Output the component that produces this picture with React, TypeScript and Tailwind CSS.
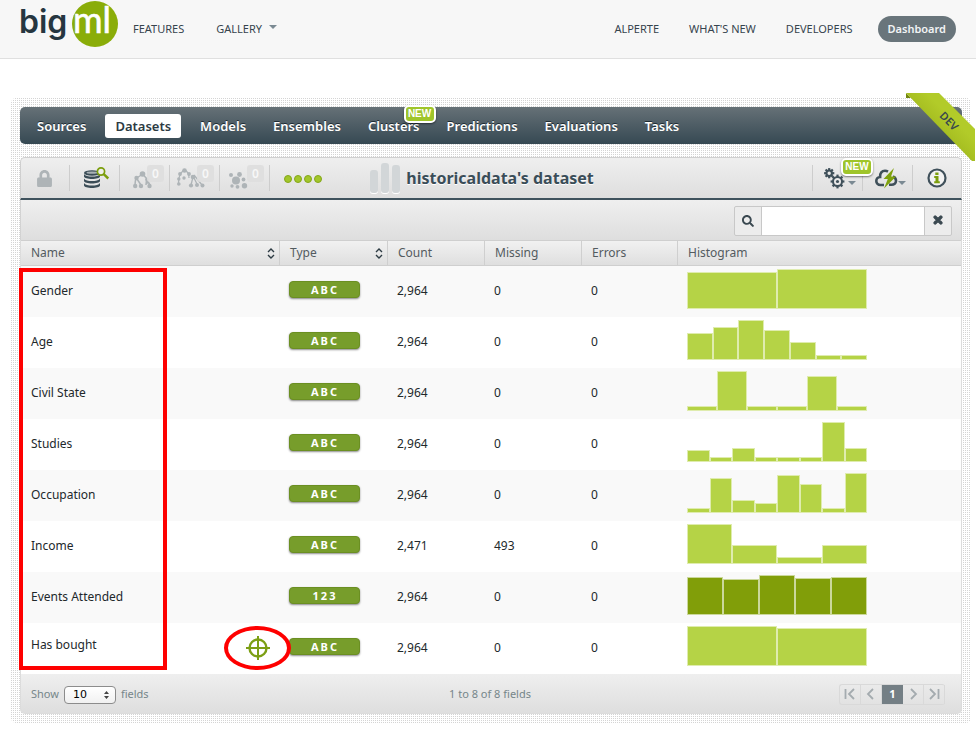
import React from 'react';
import { FaLock, FaSearch, FaTimes } from 'react-icons/fa';

type Field = {
  name: string;
  type: 'ABC' | '123';
  count: string;
  missing: string;
  errors: string;
  bars: number[];
  objective?: boolean;
};

const fields: Field[] = [
  { name: 'Gender', type: 'ABC', count: '2,964', missing: '0', errors: '0', bars: [37, 40] },
  { name: 'Age', type: 'ABC', count: '2,964', missing: '0', errors: '0', bars: [27, 33, 40, 30, 18, 5, 5] },
  { name: 'Civil State', type: 'ABC', count: '2,964', missing: '0', errors: '0', bars: [5, 40, 5, 5, 35, 5] },
  { name: 'Studies', type: 'ABC', count: '2,964', missing: '0', errors: '0', bars: [12, 5, 14, 5, 5, 5, 40, 14] },
  { name: 'Occupation', type: 'ABC', count: '2,964', missing: '0', errors: '0', bars: [5, 35, 13, 10, 38, 29, 5, 40] },
  { name: 'Income', type: 'ABC', count: '2,471', missing: '493', errors: '0', bars: [40, 19, 7, 19] },
  { name: 'Events Attended', type: '123', count: '2,964', missing: '0', errors: '0', bars: [38, 36, 40, 37, 38] },
  { name: 'Has bought', type: 'ABC', count: '2,964', missing: '0', errors: '0', bars: [40, 38], objective: true },
];

const tabs = ['Sources', 'Datasets', 'Models', 'Ensembles', 'Clusters', 'Predictions', 'Evaluations', 'Tasks'];

function Logo() {
  return (
    <svg width="98" height="48" viewBox="0 0 98 48" role="img" aria-label="bigml">
      <text x="-1" y="33" fontFamily="Inter, sans-serif" fontWeight="600" fontSize="32" fill="#263640">big</text>
      <circle cx="75" cy="24" r="23" fill="#8aad09" />
      <text x="53" y="33" fontFamily="Lato, sans-serif" fontSize="36" fill="#fff" stroke="#fff" strokeWidth="0.6">ml</text>
    </svg>
  );
}

function Caret({ className }: { className?: string }) {
  return (
    <svg width="8" height="4" viewBox="0 0 8 4" className={className} aria-hidden="true">
      <path d="M0 0h8L4 4z" fill="#7b8a93" />
    </svg>
  );
}

function SiteHeader() {
  return (
    <header className="flex h-[59px] items-center border-b border-[#e0e0e0] bg-[#f7f7f7] pl-5 pr-5 text-[11px] text-[#36444e]">
      <a href="#home" className="mb-[11px] mr-[15px]"><Logo /></a>
      <nav className="flex items-center gap-8">
        <a href="#features">FEATURES</a>
        <a href="#gallery" className="flex items-center gap-[7px]">GALLERY <Caret className="mb-1" /></a>
      </nav>
      <nav className="ml-auto flex items-center gap-[30px]">
        <a href="#account">ALPERTE</a>
        <a href="#news">WHAT'S NEW</a>
        <a href="#developers">DEVELOPERS</a>
      </nav>
      <button type="button" className="ml-[25px] h-[26px] rounded-full bg-[#69757b] px-[10px] text-[11px] font-semibold text-[#f2f4f5]">Dashboard</button>
    </header>
  );
}

function NewBadge({ className }: { className: string }) {
  return (
    <span className={`absolute flex h-[18px] w-8 items-center justify-center rounded-[5px] border-2 border-white bg-[#9fc52a] font-['Liberation_Sans',sans-serif] text-[10px] font-bold leading-none text-white shadow-[0_1px_2px_rgba(0,0,0,0.5)] ${className}`}>
      NEW
    </span>
  );
}

function Ribbon() {
  return (
    <svg width="70" height="68" viewBox="0 0 70 68" className="pointer-events-none absolute -right-[5px] -top-[5px]" role="img" aria-label="Development mode">
      <defs>
        <linearGradient id="ribbon" x1="0.35" y1="0.65" x2="0.65" y2="0.35">
          <stop offset="0" stopColor="#9db41b" />
          <stop offset="1" stopColor="#b2cb29" />
        </linearGradient>
      </defs>
      <path d="M0 0v5h5zM64 67h5v-5z" fill="#71850d" />
      <path d="M0 0h33l36 36v32h-3z" fill="url(#ribbon)" />
      <text x="43" y="32" transform="rotate(45 43 28)" textAnchor="middle" fontFamily="Noto Sans, sans-serif" fontWeight="600" fontSize="11" fill="#37474f">DEV</text>
    </svg>
  );
}

function MainTabs() {
  return (
    <nav className="flex h-[37px] items-center gap-[11px] rounded-[5px] bg-linear-to-b from-[#667177] to-[#364953] px-[9px] text-[13px] font-semibold text-white">
      {tabs.map((tab) => (
        <a
          key={tab}
          href={`#${tab.toLowerCase()}`}
          className={tab === 'Datasets'
            ? 'relative flex h-6 items-center rounded-[3px] bg-white px-[10px] pt-[2px] text-[#2c3a42]'
            : 'relative flex h-6 items-center px-2 pt-[2px] [text-shadow:0_-1px_0_#1d2b33]'}
        >
          {tab}
          {tab === 'Clusters' && <NewBadge className="-right-2 -top-[9px] [text-shadow:none]" />}
        </a>
      ))}
    </nav>
  );
}

function DatabaseIcon() {
  return (
    <svg width="26" height="22" viewBox="0 0 26 22" aria-hidden="true">
      <g fill="#3b4d57">
        <path d="M0 7v2.500C0 11 4 12 8 12s8-1 8-2.500V7c-1 1.800-4.500 2.600-8 2.600S1 8.800 0 7z" />
        <path d="M0 11.500v2.500c0 1.500 4 2.500 8 2.500s8-1 8-2.500v-2.500c-1 1.800-4.500 2.600-8 2.600s-7-.8-8-2.600z" />
        <path d="M0 16v2.500C0 20 4 21 8 21s8-1 8-2.500V16c-1 1.800-4.500 2.600-8 2.600S1 17.800 0 16z" />
        <ellipse cx="8" cy="6" rx="8" ry="2.700" />
      </g>
      <ellipse cx="8" cy="5.700" rx="5.500" ry="1.100" fill="#a9b1b5" />
      <circle cx="17" cy="4.500" r="3.600" fill="#eef0ea" stroke="#7c9e0d" strokeWidth="1.700" />
      <path d="M19.700 7.200l4.600 4.300" stroke="#7c9e0d" strokeWidth="2.400" />
    </svg>
  );
}

function TreeIcon() {
  return (
    <svg width="19" height="18" viewBox="0 0 19 18" fill="#aeb4b7" stroke="#aeb4b7" aria-hidden="true">
      <path d="M9 3.500L3 7.500M10 3.500l4 4.500v5M3 7.500C2 10 2 12 2 14M4 8l4 6M13.500 8.500L13 14M14 9l3 5" fill="none" strokeWidth="1.500" />
      <g stroke="none">
        <circle cx="9.500" cy="3" r="2.800" /><circle cx="3.500" cy="7" r="2.200" />
        <circle cx="2.200" cy="15" r="2.200" /><circle cx="8" cy="15" r="2.200" />
        <circle cx="16.500" cy="15" r="2.200" /><circle cx="14" cy="8.500" r="1.800" />
      </g>
    </svg>
  );
}

function EnsembleIcon() {
  return (
    <svg width="28" height="20" viewBox="0 0 28 20" fill="#aeb4b7" stroke="#aeb4b7" aria-hidden="true">
      <path d="M7 2C3 5 1.500 9 1.500 15M8 2c3 2 4 5 4 8M16 9l-2 8M16 8l4 8M17 7l8 10" fill="none" strokeWidth="1.300" />
      <g stroke="none">
        <circle cx="7.500" cy="2.500" r="2.300" /><circle cx="3" cy="6" r="1.900" />
        <circle cx="1.800" cy="11" r="1.700" /><circle cx="1.800" cy="16" r="1.800" />
        <circle cx="7" cy="10" r="1.700" /><circle cx="12" cy="6" r="1.900" />
        <circle cx="16" cy="9" r="2.300" /><circle cx="14" cy="17.500" r="2.100" />
        <circle cx="20" cy="17" r="2" /><circle cx="25.500" cy="17.500" r="2" />
      </g>
    </svg>
  );
}

function ClusterIcon() {
  return (
    <svg width="19" height="17" viewBox="0 0 19 17" fill="#aeb4b7" aria-hidden="true">
      <circle cx="7" cy="8.500" r="4" /><circle cx="2" cy="3" r="2" />
      <circle cx="10.500" cy="2.500" r="2.400" /><circle cx="14.500" cy="7.500" r="1.900" />
      <circle cx="15.500" cy="13.800" r="2.700" /><circle cx="8.500" cy="14.800" r="1.900" />
      <circle cx="3" cy="14" r="1.700" />
    </svg>
  );
}

function Gear({ cx, cy, r, hub }: { cx: number; cy: number; r: number; hub: string }) {
  return (
    <g transform={`translate(${cx} ${cy})`}>
      {[0, 45, 90, 135].map((a) => (
        <path key={a} d={`M0 ${-r - 2.4}V${r + 2.4}`} transform={`rotate(${a})`} stroke="#3f505a" strokeWidth="2.200" />
      ))}
      <circle r={r} fill="#e9e9e9" stroke="#3f505a" strokeWidth="2" />
      <circle r={r * 0.35} fill={hub} />
    </g>
  );
}

function GearsIcon() {
  return (
    <svg width="21" height="21" viewBox="0 0 21 21" aria-hidden="true">
      <Gear cx={5.200} cy={5.200} r={2.700} hub="#e9e9e9" />
      <Gear cx={13.500} cy={13.500} r={4.500} hub="#3f505a" />
    </svg>
  );
}

function CloudBoltIcon() {
  return (
    <svg width="23" height="21" viewBox="0 0 23 21" aria-hidden="true">
      <path d="M9 17H5.500C3 17 1.300 15.300 1.300 13s1.600-4 3.800-4C4.800 5 7 2.800 10 2.800c1 0 2 .2 3 .8M14 16.800h2.500c2.500 0 4.500-1.500 4.500-4 0-2-1-3.500-3-4.300" fill="none" stroke="#3f505a" strokeWidth="2.600" />
      <path d="M19 0L8.500 11h4.300L9 20.500 21 8.500h-5z" fill="#7fa20d" />
    </svg>
  );
}

function ToolButton({ label, children, badge }: { label: string; children: React.ReactNode; badge?: string }) {
  return (
    <button type="button" aria-label={label} className="relative flex h-[26px] w-[50px] items-center justify-center border-r border-[#cdcdcd]">
      {children}
      {badge && (
        <span className="absolute right-[5px] top-0 flex h-[17px] w-[17px] items-center justify-center rounded-[3px] bg-[#dedede]/90 text-[12px] font-semibold text-[#f7f7f7]">{badge}</span>
      )}
    </button>
  );
}

function Toolbar() {
  return (
    <div className="grid h-[43px] grid-cols-[1fr_auto_1fr] items-center rounded-t-[5px] border border-b-2 border-[#cfcfcf] border-b-[#3f525d] bg-linear-to-b from-[#efefef] to-[#dedede]">
      <div className="-ml-px flex items-center">
        <ToolButton label="Privacy"><FaLock size={17} color="#aeb4b7" /></ToolButton>
        <ToolButton label="View dataset"><span className="ml-1"><DatabaseIcon /></span></ToolButton>
        <ToolButton label="Models" badge="0"><span className="mr-1 pt-1"><TreeIcon /></span></ToolButton>
        <ToolButton label="Ensembles" badge="0"><span className="mr-2"><EnsembleIcon /></span></ToolButton>
        <ToolButton label="Clusters" badge="0"><span className="mr-3 pt-1"><ClusterIcon /></span></ToolButton>
        <div className="ml-[14px] flex gap-[2px] pt-px">
          {[0, 1, 2, 3].map((i) => (
            <span key={i} className="size-2 rounded-full border border-[#84a71a] bg-[#a2c62a]" />
          ))}
        </div>
      </div>
      <div className="flex items-center gap-[6px] pr-[18px]">
        <svg width="30" height="31" viewBox="0 0 30 31" aria-hidden="true">
          <g fill="#fff"><rect y="8" width="8" height="23" rx="3" /><rect x="11" y="1" width="8" height="30" rx="3" /><rect x="22" y="3" width="8" height="28" rx="3" /></g>
          <g fill="#d2d6d8"><rect y="7" width="8" height="23" rx="3" /><rect x="11" width="8" height="30" rx="3" /><rect x="22" y="2" width="8" height="28" rx="3" /></g>
        </svg>
        <h1 className="text-[16px] font-bold leading-6 text-[#3a4d58] [text-shadow:0_1px_0_#fff]">historicaldata's dataset</h1>
      </div>
      <div className="flex items-center justify-end">
        <div className="h-[26px] border-l border-[#cdcdcd]" />
        <div className="relative">
          <ToolButton label="Configure"><span className="ml-1 flex items-end gap-[3px]"><GearsIcon /><Caret className="mb-1" /></span></ToolButton>
          <NewBadge className="-top-[7px] left-[28px]" />
        </div>
        <ToolButton label="Actions"><span className="ml-[6px] flex items-end"><CloudBoltIcon /><Caret className="mb-1" /></span></ToolButton>
        <button type="button" aria-label="Information" className="flex w-12 justify-center">
          <svg width="20" height="20" viewBox="0 0 20 20" aria-hidden="true">
            <circle cx="10" cy="10" r="8.500" fill="#f2f2f2" stroke="#3f505a" strokeWidth="2.200" />
            <path d="M8.300 4.500h3.200v2.500H8.300zM7.200 8h4.300v5.300h1.300v2H7.200v-2h1.300V10H7.200z" fill="#7c9e0d" />
          </svg>
        </button>
      </div>
    </div>
  );
}

function SearchBar() {
  return (
    <div className="flex h-10 items-center justify-end border-x border-[#d2d2d2] bg-linear-to-b from-[#efefef] to-[#dedede] pr-[9px]">
      <form role="search" className="mt-[2px] flex h-[30px] rounded-[2px] border border-[#c8c8c8] bg-[#ececec]" onSubmit={(e) => e.preventDefault()}>
        <button type="submit" aria-label="Search" className="flex w-[26px] items-center justify-center text-[#3a4850]"><FaSearch size={12} /></button>
        <input type="text" aria-label="Search fields" className="w-[164px] border-x border-[#c8c8c8] bg-white px-2 text-xs outline-none" />
        <button type="button" aria-label="Clear search" className="flex w-[26px] items-center justify-center pb-[2px] text-[#3a4850]">
          <FaTimes size={12} stroke="#3a4850" strokeWidth={50} className="overflow-visible" />
        </button>
      </form>
    </div>
  );
}

function SortIcon() {
  return (
    <svg width="8" height="11" viewBox="0 0 8 11" fill="none" stroke="#2d3b43" strokeWidth="1.400" aria-hidden="true">
      <path d="M1 4l3-3 3 3M1 7l3 3 3-3" />
    </svg>
  );
}

function TypeBadge({ type }: { type: string }) {
  return (
    <span className="flex h-[17px] w-[71px] items-center justify-center rounded-[4px] border border-[#6b8f22] bg-[#779d2b] pl-px text-[11px] font-bold leading-none tracking-[2px] text-white shadow-[0_1px_2px_rgba(0,0,0,0.45)]">
      {type}
    </span>
  );
}

function Histogram({ bars, dark }: { bars: number[]; dark: boolean }) {
  return (
    <div className="flex h-10 w-[180px] items-end">
      {bars.map((height, i) => (
        <div
          key={i}
          className={dark ? 'flex-1 border border-[#cbd89b] bg-[#819e09]' : 'flex-1 border border-[#dfecae] bg-[#b5d346]'}
          style={{ height }}
        />
      ))}
    </div>
  );
}

function TargetIcon() {
  return (
    <svg width="24" height="24" viewBox="0 0 24 24" fill="none" stroke="#7c9f14" aria-hidden="true">
      <circle cx="12" cy="12" r="8.500" strokeWidth="2.400" />
      <path d="M12 0v24M0 12h24" strokeWidth="2" />
    </svg>
  );
}

function FieldsTable() {
  const head = 'border-r border-y border-[#cfcfcf] px-[10px] font-normal';
  const sortable = 'border-r border-y border-[#cfcfcf] pl-[10px] pr-1 font-normal';
  return (
    <table className="w-full table-fixed border-separate border-spacing-0 border-x border-[#dcdcdc] text-left text-xs">
      <colgroup>
        <col className="w-[259px]" />
        <col className="w-[108px]" />
        <col className="w-[97px]" />
        <col className="w-[97px]" />
        <col className="w-24" />
        <col />
      </colgroup>
      <thead>
        <tr className="h-[26px] bg-linear-to-b from-[#f2f2f2] to-[#dedede] text-[#535b5f]">
          <th className={sortable}><span className="flex items-center justify-between">Name <SortIcon /></span></th>
          <th className={sortable}><span className="flex items-center justify-between">Type <SortIcon /></span></th>
          <th className={head}>Count</th>
          <th className={head}>Missing</th>
          <th className={head}>Errors</th>
          <th className="border-y border-[#cfcfcf] px-[10px] font-normal">Histogram</th>
        </tr>
      </thead>
      <tbody className="text-[#22282b]">
        {fields.map((f) => (
          <tr key={f.name} className="h-[51px] odd:bg-[#f9f9f9] even:bg-white">
            <td className="px-[10px] pb-[2px]">
              {f.objective ? (
                <div className="flex items-center justify-between">
                  <span className="pb-[6px]">{f.name}</span>
                  <TargetIcon />
                </div>
              ) : f.name}
            </td>
            <td className="px-[9px] pb-1"><TypeBadge type={f.type} /></td>
            <td className="px-[9px] pb-[2px]">{f.count}</td>
            <td className="px-[9px] pb-[2px]">{f.missing}</td>
            <td className="px-[9px] pb-[2px]">{f.errors}</td>
            <td className="px-[9px] pb-[5px]"><Histogram bars={f.bars} dark={f.type === '123'} /></td>
          </tr>
        ))}
      </tbody>
    </table>
  );
}

function PageIcon({ d }: { d: string }) {
  return (
    <svg width="12" height="12" viewBox="0 0 12 12" fill="none" stroke="#a4abaf" strokeWidth="1.800" aria-hidden="true"><path d={d} /></svg>
  );
}

function TableFooter() {
  const cell = 'flex w-[21px] items-center justify-center border-r border-[#d9d9d9]';
  return (
    <div className="grid h-10 grid-cols-3 items-center rounded-b-[5px] border-x border-b border-[#dcdcdc] bg-linear-to-b from-[#efefef] to-[#dedede] pl-[10px] pr-4 pt-px text-[11px] text-[#76868a]">
      <div className="flex items-center">
        <label htmlFor="page-size">Show</label>
        <span className="relative mx-[5px] mt-px">
          <select id="page-size" defaultValue="10" className="block h-[18px] w-[52px] appearance-none rounded-[4px] border border-[#8c8c8c] bg-linear-to-b from-white to-[#f1f1f1] pl-2 font-['DejaVu_Sans',sans-serif] text-[11px] leading-4 text-black">
            <option>10</option>
            <option>25</option>
            <option>50</option>
          </select>
          <svg width="5" height="8" viewBox="0 0 5 8" className="pointer-events-none absolute right-[7px] top-[5px]" fill="#444" aria-hidden="true"><path d="M0 3l2.500-3L5 3zM0 5h5L2.500 8z" /></svg>
        </span>
        <span>fields</span>
      </div>
      <p className="pl-1 text-center">1 to 8 of 8 fields</p>
      <nav aria-label="Pages" className="flex h-[21px] justify-self-end rounded-[3px] border border-r-0 border-[#d9d9d9]">
        <button type="button" aria-label="First page" className={cell}><PageIcon d="M1.500 1v10M10 1L5 6l5 5" /></button>
        <button type="button" aria-label="Previous page" className={cell}><PageIcon d="M8 1L3 6l5 5" /></button>
        <button type="button" className="flex w-[21px] items-center justify-center bg-[#747f85] font-bold text-white">1</button>
        <button type="button" aria-label="Next page" className={cell}><PageIcon d="M4 1l5 5-5 5" /></button>
        <button type="button" aria-label="Last page" className={cell}><PageIcon d="M2 1l5 5-5 5M10.500 1v10" /></button>
      </nav>
    </div>
  );
}

export default function App() {
  return (
    <div className="overflow-x-hidden bg-white pb-2 font-['Noto_Sans',sans-serif]">
      <SiteHeader />
      <main className="relative ml-[11px] mr-[5px] mt-[39px] rounded-[5px] bg-[conic-gradient(from_270deg_at_1px_1px,#d4d4d4_90deg,transparent_0)] bg-size-[2px_2px] p-[9px]">
        <MainTabs />
        <section className="relative mt-[13px]">
          <Toolbar />
          <SearchBar />
          <FieldsTable />
          <TableFooter />
          <div className="pointer-events-none absolute -left-px top-[111px] h-[402px] w-[148px] border-4 border-[#fe0000]" />
          <div className="pointer-events-none absolute left-[204px] top-[469px] h-[44px] w-[67px] rounded-[50%] border-4 border-[#fe0000]" />
        </section>
        <Ribbon />
      </main>
    </div>
  );
}
